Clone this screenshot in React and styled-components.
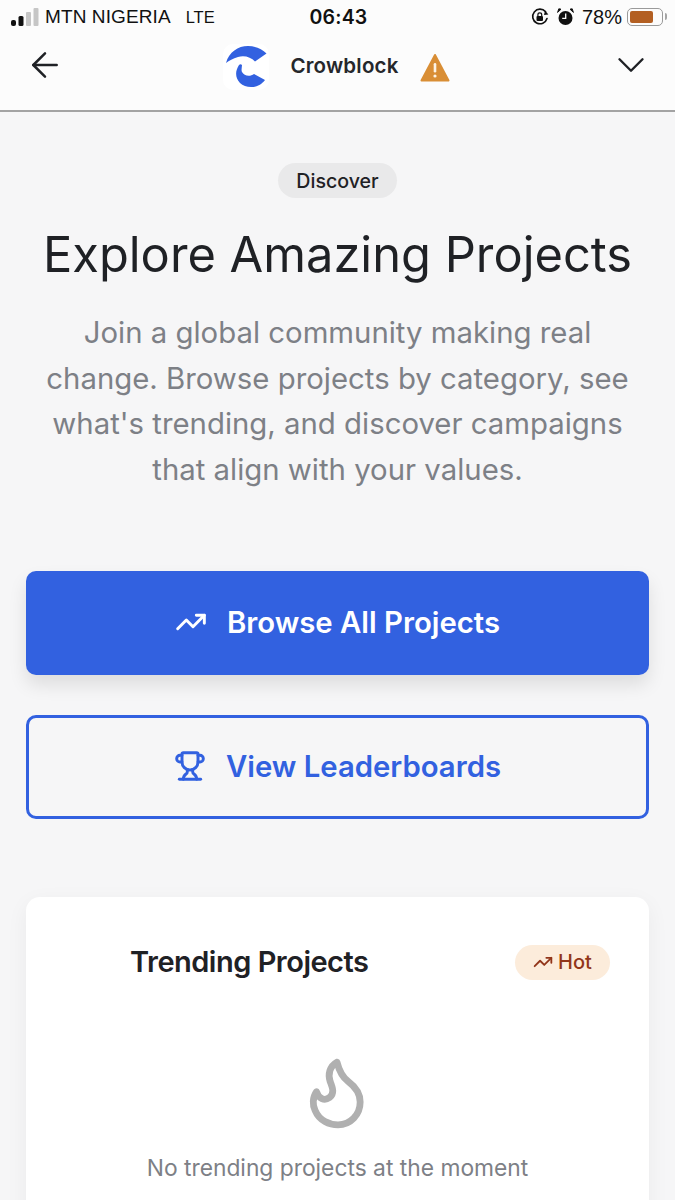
import React from "react"
import styled, { createGlobalStyle } from "styled-components"
import { ArrowLeft, ChevronDown, TrendingUp, Trophy } from "lucide-react"

const blue = "#3261e0"
const ink = "#1f2125"
const gray = "#7d8086"

const GlobalStyle = createGlobalStyle`
  html, body {
    margin: 0;
    height: 1200px;
    overflow: hidden;
    background: #f6f6f7;
    font-family: Inter, "Liberation Sans", sans-serif;
  }
`

const Page = styled.div`
  width: 675px;
  height: 1200px;
  overflow: hidden;
`

const TopArea = styled.header`
  height: 110px;
  background: #fcfcfc;
  border-bottom: 2px solid #a3a3a3;
  box-sizing: content-box;
`

const StatusBar = styled.div`
  height: 34px;
  padding: 0 9px 0 11px;
  display: grid;
  grid-template-columns: 1fr auto 1fr;
  align-items: center;
  color: #111;
  font-family: "Liberation Sans", sans-serif;
  font-size: 19px;
`

const StatusLeft = styled.div`
  display: flex;
  align-items: center;
  gap: 6px;
`

const Carrier = styled.span`
  letter-spacing: 0.1px;
`

const Network = styled.span`
  margin-left: 9px;
  font-size: 16.5px;
`

const Clock = styled.div`
  font-family: Inter, sans-serif;
  font-weight: 600;
  font-size: 19.5px;
  letter-spacing: 0.2px;
`

const StatusRight = styled.div`
  display: flex;
  align-items: center;
  justify-content: flex-end;
  gap: 8px;
`

const Percent = styled.span`
  font-size: 20px;
  margin-right: -3px;
`

const Battery = styled.div`
  width: 36px;
  height: 18px;
  box-sizing: border-box;
  border: 1.5px solid #9a9a9a;
  border-radius: 5px;
  padding: 2px;
  margin-right: 3px;
  display: flex;
  position: relative;
  &::after {
    content: "";
    position: absolute;
    right: -5px;
    top: 4px;
    width: 2px;
    height: 7px;
    background: #a5a5a5;
    border-radius: 0 2px 2px 0;
  }
`

const BatteryFill = styled.div`
  background: #b35f22;
  border-radius: 2px;
  height: 100%;
`

const NavBar = styled.nav`
  height: 76px;
  padding: 0 21px 14px 25px;
  box-sizing: border-box;
  display: flex;
  align-items: center;
  justify-content: space-between;
  color: ${ink};
`

const Brand = styled.div`
  display: flex;
  align-items: center;
  padding-top: 4px;
`

const BrandName = styled.span`
  font-size: 20.5px;
  font-weight: 600;
  margin: 0 21px 4px 21px;
  letter-spacing: 0.2px;
  color: #25272b;
`

const Main = styled.main`
  padding: 51px 26px 0;
  display: flex;
  flex-direction: column;
  align-items: center;
`

const Badge = styled.div`
  height: 35px;
  width: 119px;
  border-radius: 18px;
  background: #e9e9ea;
  color: ${ink};
  font-size: 19.6px;
  font-weight: 500;
  display: flex;
  align-items: center;
  justify-content: center;
`

const Title = styled.h1`
  margin: 28px 0 0;
  font-size: 48.8px;
  line-height: 58px;
  font-weight: 400;
  color: ${ink};
  white-space: nowrap;
`

const Lead = styled.p`
  margin: 26px 0 0;
  width: 600px;
  font-size: 29.35px;
  line-height: 45.5px;
  text-align: center;
  color: ${gray};
`

const Actions = styled.div`
  width: 100%;
  margin-top: 79px;
  display: flex;
  flex-direction: column;
  gap: 40px;
`

const ActionButton = styled.button`
  width: 100%;
  height: 104px;
  padding: 0 0 2px;
  border-radius: 10px;
  border: ${props => (props.$outlined ? `3px solid ${blue}` : "none")};
  background: ${props => (props.$outlined ? "transparent" : blue)};
  color: ${props => (props.$outlined ? blue : "#fff")};
  box-shadow: ${props => (props.$outlined ? "none" : "0 10px 18px rgba(0, 0, 0, 0.1)")};
  font-family: inherit;
  font-size: 29.3px;
  font-weight: 600;
  display: flex;
  align-items: center;
  justify-content: center;
  gap: 20px;
`

const Card = styled.section`
  width: 100%;
  margin-top: 78px;
  height: 400px;
  box-sizing: border-box;
  padding: 47px 39px 0 104px;
  background: #fff;
  border-radius: 14px;
  box-shadow: 0 6px 22px rgba(0, 0, 0, 0.05);
`

const CardHeader = styled.div`
  display: flex;
  align-items: center;
  justify-content: space-between;
`

const CardTitle = styled.h2`
  margin: 0;
  font-size: 29px;
  line-height: 36px;
  font-weight: 600;
  letter-spacing: -0.5px;
  color: ${ink};
`

const HotBadge = styled.div`
  height: 35px;
  width: 95px;
  border-radius: 18px;
  background: #fcecdb;
  color: #92361a;
  font-size: 20px;
  font-weight: 500;
  display: flex;
  align-items: center;
  justify-content: center;
  gap: 5px;
`

const Empty = styled.div`
  margin: 76px 0 0 -65px;
  display: flex;
  flex-direction: column;
  align-items: center;
`

const EmptyText = styled.p`
  margin: 23px 0 0;
  font-size: 22.8px;
  line-height: 28px;
  color: ${gray};
`

const SignalIcon = () => (
  <svg width="28" height="20" viewBox="0 0 28 20">
    <rect x="0" y="13" width="5" height="6" rx="2" fill="#111" />
    <rect x="7.5" y="9" width="5" height="10" rx="1.5" fill="#111" />
    <rect x="15" y="5" width="5" height="14" rx="1" fill="#c6c6c6" />
    <rect x="22.5" y="1" width="5" height="18" rx="1" fill="#c6c6c6" />
  </svg>
)

const LockRotationIcon = () => (
  <svg width="18" height="18" viewBox="0 0 18 18" fill="none">
    <path d="M16 10.5A7.3 7.3 0 1 1 14.6 3.8" stroke="#111" strokeWidth="1.6" strokeLinecap="round" />
    <path d="M17.4 6.6 13 7l1-4.4z" fill="#111" />
    <rect x="5.5" y="8" width="6.5" height="5" rx="1" fill="#111" />
    <path d="M6.9 8V6.8a1.9 1.9 0 0 1 3.8 0V8" stroke="#111" strokeWidth="1.2" />
  </svg>
)

const AlarmIcon = () => (
  <svg width="17" height="18" viewBox="0 0 17 18">
    <circle cx="8.5" cy="10" r="7" fill="#111" />
    <path d="M0.6 4.4 4 1.2 1.8 0.8zM16.4 4.4 13 1.2 15.2 0.8z" fill="#111" stroke="#111" strokeWidth="1" strokeLinejoin="round" />
    <path d="M8.7 5.5V10.4H5.2" stroke="#fff" strokeWidth="1.3" fill="none" />
  </svg>
)

const LogoIcon = () => (
  <svg width="46" height="46" viewBox="0 0 46 46">
    <rect width="46" height="46" rx="10" fill="#ffffff" />
    <path d="M3 19C6 8 15 2 25 2C32 2 39 5 43.5 9.5L32 17.5C28 13 21 11 15 13C10 14.5 6 16.5 3 19Z" fill="#3261e0" />
    <path d="M16 21C12 27 12 34 17 39C22 44 32 44.5 38 40C40 38 41.5 37 42 36L31 30C27 33 21 32 19 28C18 26 19 23 19 21C18 20 17 20 16 21Z" fill="#3261e0" />
  </svg>
)

const WarningIcon = () => (
  <svg width="30" height="29" viewBox="0 0 30 29">
    <path d="M15 2 28.5 27.5H1.5Z" fill="#d98e35" stroke="#d98e35" strokeWidth="2" strokeLinejoin="round" />
    <rect x="13.7" y="10" width="2.6" height="9.5" rx="1.3" fill="#fdf3e4" />
    <circle cx="15" cy="23" r="1.6" fill="#fdf3e4" />
  </svg>
)

const FlameOutline = () => (
  <svg width="58" height="75" viewBox="90 50 170 220" fill="none">
    <path
      d="M172 68C150 80 145 105 152 125C160 145 165 160 150 172C135 183 118 175 112 155C100 172 100 195 108 210C120 240 150 252 175 252C212 252 240 222 240 185C240 160 225 140 205 125C188 112 178 92 172 68Z"
      stroke="#b0b0b0"
      strokeWidth="20"
      strokeLinejoin="round"
    />
  </svg>
)

const App = () => (
  <Page>
    <GlobalStyle />
    <TopArea>
      <StatusBar>
        <StatusLeft>
          <SignalIcon />
          <Carrier>MTN NIGERIA</Carrier>
          <Network>LTE</Network>
        </StatusLeft>
        <Clock>06:43</Clock>
        <StatusRight>
          <LockRotationIcon />
          <AlarmIcon />
          <Percent>78%</Percent>
          <Battery>
            <BatteryFill style={{ width: "78%" }} />
          </Battery>
        </StatusRight>
      </StatusBar>
      <NavBar>
        <ArrowLeft size={40} strokeWidth={1.5} />
        <Brand>
          <LogoIcon />
          <BrandName>Crowblock</BrandName>
          <WarningIcon />
        </Brand>
        <ChevronDown size={46} strokeWidth={1.25} />
      </NavBar>
    </TopArea>
    <Main>
      <Badge>Discover</Badge>
      <Title>Explore Amazing Projects</Title>
      <Lead>
        Join a global community making real change. Browse projects by category, see what's trending, and discover campaigns that align with your values.
      </Lead>
      <Actions>
        <ActionButton>
          <TrendingUp size={32} strokeWidth={2.2} />
          Browse All Projects
        </ActionButton>
        <ActionButton $outlined>
          <Trophy size={32} strokeWidth={2.2} />
          View Leaderboards
        </ActionButton>
      </Actions>
      <Card>
        <CardHeader>
          <CardTitle>Trending Projects</CardTitle>
          <HotBadge>
            <TrendingUp size={20} strokeWidth={2.2} />
            Hot
          </HotBadge>
        </CardHeader>
        <Empty>
          <FlameOutline />
          <EmptyText>No trending projects at the moment</EmptyText>
        </Empty>
      </Card>
    </Main>
  </Page>
)

export default App
